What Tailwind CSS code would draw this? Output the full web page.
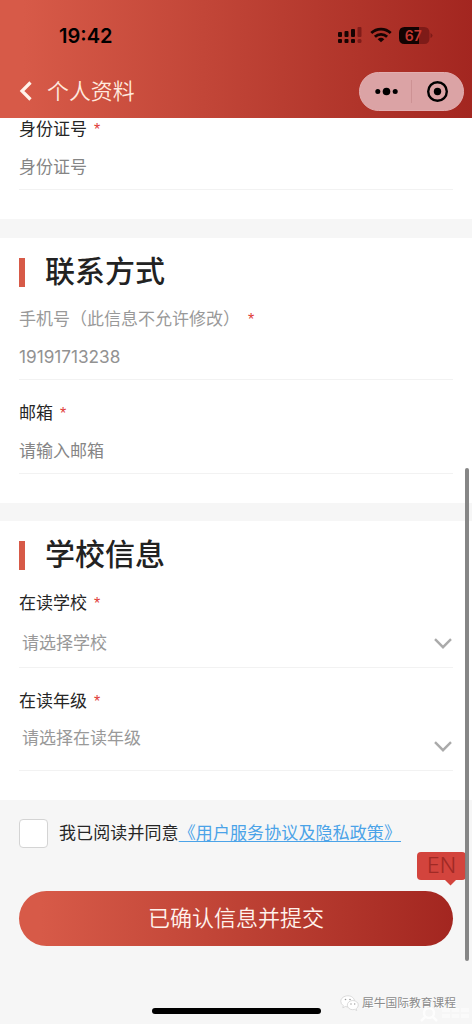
<!DOCTYPE html>
<html lang="zh-CN">
<head>
<meta charset="utf-8">
<title>个人资料</title>
<script src="https://cdn.jsdelivr.net/npm/@tailwindcss/browser@4"></script>
</head>
<body class="bg-[#f6f6f6]">
<div class="relative flex h-[1024px] w-[472px] flex-col overflow-hidden bg-[#f6f6f6] font-['Liberation_Sans','Noto_Sans_CJK_SC',sans-serif] text-[17px] text-[#262626]">

  <header class="h-[118px] shrink-0 bg-linear-to-r from-[#d75a48] from-5% to-[#a32620]">
    <div class="flex h-16 items-center justify-between pt-[6px] pr-[39px] pl-[59px]">
      <span class="pt-px font-['Inter',sans-serif] text-[20px] leading-6 font-semibold text-black">19:42</span>
      <div class="flex items-center">
        <svg class="h-4 w-6" viewBox="0 0 24 16" fill="#170403">
          <rect x="0" y="5" width="4" height="5" rx="1"/><rect x="6.5" y="4" width="4" height="6" rx="1"/><rect x="13" y="2" width="4" height="8" rx="1"/><rect x="19.5" y="0" width="4" height="10" rx="1" fill="#801c19"/>
          <rect x="0" y="12" width="4" height="4" rx="1"/><rect x="6.5" y="12" width="4" height="4" rx="1"/><rect x="13" y="12" width="4" height="4" rx="1"/><rect x="19.5" y="12" width="4" height="4" rx="1.5" fill="#801c19"/>
        </svg>
        <svg class="ml-2 h-[16px] w-[22px]" viewBox="0 0 22 16" fill="none" stroke="#170403" stroke-width="2.8">
          <path d="M1.3 6A14 14 0 0 1 20.7 6"/><path d="M4.9 9.8A8.8 8.8 0 0 1 17.1 9.8"/><path d="M11 15.2L7.7 12.2Q11 9.4 14.3 12.2Z" fill="#170403" stroke="none"/>
        </svg>
        <svg class="ml-[7px] h-[17px] w-[34px]" viewBox="0 0 34 17">
          <path d="M5.5 0H20V17H5.500Q0 17 0 11V6Q0 0 5.500 0Z" fill="#120302"/>
          <path d="M20 0H25Q30.500 0 30.500 6V11Q30.500 17 25 17H20Z" fill="#7e1b18"/>
          <path d="M31.500 6Q33.500 7 33.500 8.500T31.500 11Z" fill="#7e1b18"/>
          <text x="14.300" y="13.600" text-anchor="middle" font-family="Inter" font-size="14" font-weight="600" fill="#c43a33">67</text>
        </svg>
      </div>
    </div>
    <div class="flex h-[54px] items-center pr-[8px] pl-[19px]">
      <svg class="h-5 w-[13px]" viewBox="0 0 13 20" fill="none" stroke="#fff3ea" stroke-width="3.2"><path d="M11.500 1.500L3 10L11.500 18.500"/></svg>
      <h1 class="ml-[15px] pt-[2px] text-[21.9px] leading-8 font-[350] text-[#ffe9de]">个人资料</h1>
      <div class="ml-auto flex h-[39px] w-[105px] items-center rounded-full border border-[#e2aeb0] bg-[#dba3a5]">
        <svg class="h-full w-full" viewBox="0 0 103 37" fill="#000"><circle cx="17.800" cy="18.500" r="2.500"/><circle cx="26.500" cy="18.500" r="3.800"/><circle cx="35.200" cy="18.500" r="2.500"/><path d="M51.500 7V30" stroke="#cd9294"/><circle cx="77.500" cy="18.500" r="9.300" fill="none" stroke="#000" stroke-width="2.400"/><circle cx="77.500" cy="18.500" r="3.700"/></svg>
      </div>
    </div>
  </header>

  <main class="flex flex-col">
    <section class="h-[101px] bg-white px-[19px]">
      <div class="flex h-[72px] flex-col border-b border-[#f2f2f2] pt-px">
        <div class="flex h-[22px] items-center leading-[22px]">身份证号<span class="ml-[7px] text-[16px] text-[#e03c36]">*</span></div>
        <div class="mt-4 h-[22px] leading-[22px] text-[#858585]">身份证号</div>
      </div>
    </section>

    <section class="mt-[19px] h-[265px] bg-white px-[19px]">
      <div class="flex h-[68px] items-center">
        <i class="h-[29px] w-[6px] bg-[#d75a48]"></i>
        <h2 class="ml-5 text-[30px] leading-10 font-medium text-[#222]">联系方式</h2>
      </div>
      <div class="flex h-[74px] flex-col border-b border-[#f2f2f2]">
        <div class="mt-[3px] flex h-[22px] items-center leading-[22px] text-[#999]">手机号（此信息不允许修改）<span class="ml-[8px] text-[16px] text-[#e03c36]">*</span></div>
        <div class="mt-[15px] h-[22px] font-['Inter',sans-serif] text-[17.200px] leading-[22px] text-[#929292]">19191713238</div>
      </div>
      <div class="flex h-[94px] flex-col border-b border-[#f2f2f2] pt-[23px]">
        <div class="flex h-[22px] items-center leading-[22px]">邮箱<span class="ml-[7px] text-[16px] text-[#e03c36]">*</span></div>
        <div class="mt-4 h-[22px] leading-[22px] text-[#858585]">请输入邮箱</div>
      </div>
    </section>

    <section class="mt-[18px] h-[279px] bg-white px-[19px]">
      <div class="flex h-[68px] items-center">
        <i class="h-[29px] w-[6px] bg-[#d75a48]"></i>
        <h2 class="ml-5 text-[30px] leading-10 font-medium text-[#222]">学校信息</h2>
      </div>
      <div class="flex h-[79px] flex-col border-b border-[#f2f2f2]">
        <div class="mt-[4px] flex h-[22px] items-center leading-[22px]">在读学校<span class="ml-[7px] text-[16px] text-[#e03c36]">*</span></div>
        <div class="mt-[18px] flex h-[22px] justify-between pl-[3px] leading-[22px] text-[#999]">请选择学校
          <svg class="mt-[5px] mr-px h-[11px] w-[18px]" viewBox="0 0 18 11" fill="none" stroke="#aaa" stroke-width="2.400"><path d="M1 1.200L9 9.200L17 1.200"/></svg>
        </div>
      </div>
      <div class="flex h-[103px] flex-col border-b border-[#f2f2f2] pt-[23px]">
        <div class="flex h-[22px] items-center leading-[22px]">在读年级<span class="ml-[7px] text-[16px] text-[#e03c36]">*</span></div>
        <div class="mt-[15px] flex h-[31px] justify-between pl-[3px] leading-[22px] text-[#999]">请选择在读年级
          <svg class="mt-[13px] mr-px h-[11px] w-[18px]" viewBox="0 0 18 11" fill="none" stroke="#aaa" stroke-width="2.400"><path d="M1 1.200L9 9.200L17 1.200"/></svg>
        </div>
      </div>
    </section>

    <div class="mt-[19px] flex h-[29px] items-center px-[19px]">
      <span class="h-[29px] w-[29px] rounded-[4px] border border-[#d4d4d4] bg-white"></span>
      <p class="ml-[11px] leading-[24px] tracking-[0.1px] whitespace-nowrap">我已阅读并同意<a class="text-[#4ba3e8] underline decoration-1 underline-offset-[2px]">《用户服务协议及隐私政策》</a></p>
    </div>
    <button class="mx-[19px] mt-[43px] h-[55px] rounded-full bg-linear-to-r from-[#d75a48] from-5% to-[#a32620] text-[22px] font-[350] text-[#fff2ec]">已确认信息并提交</button>
  </main>

  <div class="absolute top-[852px] left-[417px] h-[28px] w-[49px] rounded-[4px] bg-[#d3443d] text-center font-['Inter',sans-serif] text-[21.500px] leading-[27px] font-light text-[#a02a25]">EN
    <svg class="absolute top-[27px] left-[27px] h-[7px] w-[13px]" viewBox="0 0 13 7"><path d="M0 0H13L6.500 6.500Z" fill="#d3443d"/></svg>
  </div>
  <div class="absolute top-[468px] left-[465px] h-[493px] w-[4px] rounded-full bg-[#808080]/95"></div>
  <div class="absolute top-[1008px] left-[152px] h-[6px] w-[169px] rounded-full bg-black"></div>

  <div class="absolute top-[993px] left-[340px] flex items-center gap-[3px] text-[11.750px] leading-5 text-[#8b8b8b]">
    <svg class="h-[16px] w-[19px]" viewBox="0 0 19 16" fill="#fff" stroke="#cdcdcd" stroke-width=".7"><path d="M8 .8C4 .8 .8 3.200 .8 6.300Q.8 9 3.300 10.600L2.800 12.800L5.300 11.500Q7 12 8.500 11.800C12 11.500 14.500 9 14.500 6.200C14.500 3.200 11.500 .8 8 .8Z"/><path d="M12.800 5.500C9.700 5.500 7.300 7.600 7.300 10.100S9.700 14.700 12.800 14.700L14.700 14.400L16.700 15.500L16.200 13.700Q18.300 12.300 18.300 10.100C18.300 7.600 15.900 5.500 12.800 5.500Z"/><g fill="#999" stroke="none"><circle cx="5.500" cy="4.500" r=".8"/><circle cx="10" cy="4.500" r=".8"/><circle cx="11" cy="9" r=".7"/><circle cx="14.700" cy="9" r=".7"/></g></svg>
    <span class="[text-shadow:1px_1px_0_#fff]">犀牛国际教育课程</span>
  </div>
  <svg class="absolute top-[1005px] left-[418px] h-[18px] w-[54px] opacity-80" viewBox="0 0 54 18" fill="none" stroke="#fff" stroke-width="2.500"><circle cx="11" cy="8" r="5"/><path d="M3 16L7.500 11.500M14.500 11.500L19 16"/><path d="M24 5H51M24 11H51" stroke-width="4" stroke-opacity=".5" stroke-dasharray="8 1.500"/></svg>
</div>
</body>
</html>
